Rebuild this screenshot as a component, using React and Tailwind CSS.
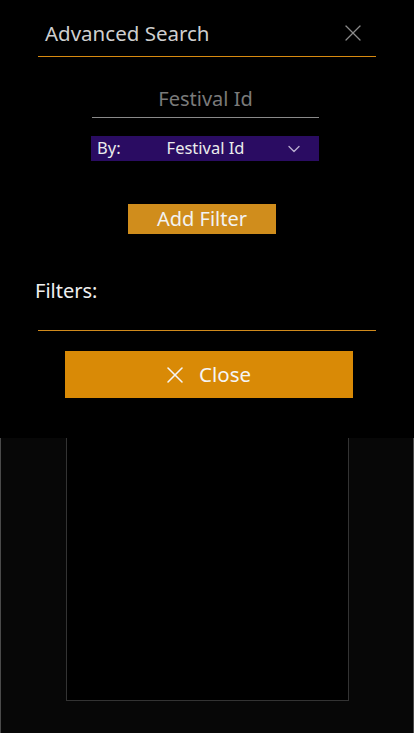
import { X, ChevronDown } from "lucide-react";

export default function App() {
  return (
    <div
      className="flex h-[733px] w-[414px] flex-col bg-black text-white"
      style={{ fontFamily: '"Noto Sans", "Open Sans", sans-serif' }}
    >
      <section className="flex h-[438px] flex-col bg-black">
        {/* header */}
        <div className="mx-[38px] mt-[16px] flex h-[41px] items-center justify-between border-b border-[#d88a10] pl-[7px] pr-[9px] pb-[6px]">
          <h1 className="text-[20.5px] leading-none text-[#cfcfcf]">Advanced Search</h1>
          <X className="h-[28px] w-[28px] text-[#8a8a8a]" strokeWidth={1.1} />
        </div>

        {/* search input */}
        <div className="ml-[92px] mt-[25px] flex h-[36px] w-[227px] items-center justify-center border-b border-[#8a8a8a] pb-[2px]">
          <span className="text-[20px] leading-none text-[#7a7a7a]">Festival Id</span>
        </div>

        {/* select */}
        <div className="ml-[91px] mt-[18px] flex h-[25px] w-[228px] items-center bg-[#2a0c62] pl-[6px] pr-[15px] text-[16.5px] text-[#ececec]">
          <span>By:</span>
          <span className="ml-[46px] flex-1">Festival Id</span>
          <ChevronDown className="h-[20px] w-[20px] text-[#b9aed0]" strokeWidth={1.6} />
        </div>

        <button
          type="button"
          className="ml-[128px] mt-[43px] flex h-[30px] w-[148px] items-center justify-center bg-[#d08d1c] text-[20px] leading-none text-[#f2f2f2]"
        >
          Add Filter
        </button>

        <div className="mx-[38px] mt-[46px] h-[51px] border-b border-[#d08a1c]">
          <span className="-ml-[3px] text-[20px] leading-none text-[#f0f0f0]">Filters:</span>
        </div>

        <button
          type="button"
          className="ml-[65px] mt-[20px] flex h-[47px] w-[288px] items-center justify-center gap-[10px] bg-[#d98a06] text-[20.5px] text-[#f5f5f5]"
        >
          <X className="-ml-[6px] h-[28px] w-[28px]" strokeWidth={1.3} />
          <span>Close</span>
        </button>
      </section>

      <div className="flex-1 border-x border-[#4a4a4a] bg-[#070707]">
        <div className="ml-[65px] h-[263px] w-[283px] border-x border-b border-[#333333] bg-black" />
      </div>
    </div>
  );
}
